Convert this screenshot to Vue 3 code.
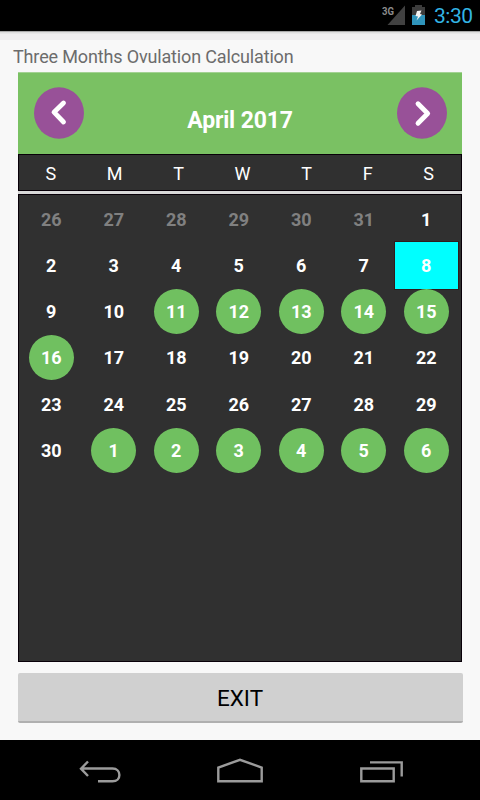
<script setup>
const weekdays = ['S', 'M', 'T', 'W', 'T', 'F', 'S']
const days = []
for (let d = 26; d <= 31; d++) days.push({ label: d, kind: 'muted' })
for (let d = 1; d <= 30; d++) {
  days.push({ label: d, kind: d === 8 ? 'selected' : d >= 11 && d <= 16 ? 'marked' : '' })
}
for (let d = 1; d <= 6; d++) days.push({ label: d, kind: 'marked' })
</script>

<template>
  <div class="screen">
    <header class="status">
      <svg class="signal" width="24" height="23" viewBox="0 0 24 23">
        <path d="M5.5 22H23V2.5Z" fill="#414141" />
        <text x="0" y="11.5" class="network" textLength="12" lengthAdjust="spacingAndGlyphs">3G</text>
      </svg>
      <svg class="battery" width="13" height="20" viewBox="0 0 13 20">
        <path d="M3 0H10V2H13V10H0V2H3Z" fill="#3c3c3c" />
        <path d="M0 10H13V20H0Z" fill="#2f94bb" />
        <path d="M5 6L9.5 5.5L8 9L10 9.5L4.5 15.5L6 11.5L3.5 11Z" fill="#f4f4f4" />
      </svg>
      <span class="clock">3:30</span>
    </header>
    <div class="shadow"></div>
    <main class="content">
      <h1 class="title"><span>Three Months Ovulation Calculation</span></h1>
      <section class="calendar">
        <div class="month">
          <button class="round" aria-label="Previous month">
            <svg width="50" height="52" viewBox="0 0 50 52">
              <ellipse cx="25" cy="26" rx="25" ry="25.7" fill="#985198" />
              <path d="M29.5 16L20 25.2L29.5 35" />
            </svg>
          </button>
          <span class="month-name">April 2017</span>
          <button class="round" aria-label="Next month">
            <svg width="50" height="52" viewBox="0 0 50 52">
              <ellipse cx="25" cy="26" rx="25" ry="25.7" fill="#985198" />
              <path d="M21 16.8L30.7 26.5L21 36.2" />
            </svg>
          </button>
        </div>
        <div class="weekdays">
          <span v-for="(w, i) in weekdays" :key="i">{{ w }}</span>
        </div>
        <div class="days">
          <div v-for="(d, i) in days" :key="i" class="day" :class="d.kind">
            <span>{{ d.label }}</span>
          </div>
        </div>
      </section>
      <button class="exit">EXIT</button>
    </main>
    <nav class="nav">
      <svg width="480" height="60" viewBox="0 0 480 60" fill="none" stroke="#9b9b9b" stroke-width="2.4">
        <path d="M98 41.3H112.5C121.7 41.3 121.7 28.5 112.5 28.5H81M88 21.5L81 28.7L88 36" />
        <path d="M218.3 41.3V27.5L240 19.8L261.7 27.5V41.3Z" />
        <path d="M361.3 28.5H393.7V41.3H361.3ZM370 22.4H401.7V36.5" />
      </svg>
    </nav>
  </div>
</template>

<style>
body { background: #f8f8f8; overflow: hidden; }
</style>

<style scoped>
.screen {
  width: 480px;
  height: 800px;
  display: flex;
  flex-direction: column;
  background: #f8f8f8;
  font-family: Roboto, "Liberation Sans", sans-serif;
}
.status {
  height: 31px;
  box-sizing: border-box;
  background: #000;
  display: flex;
  justify-content: flex-end;
  align-items: flex-start;
  padding: 3px 7.5px 0 0;
}
.network { font-size: 11.5px; font-weight: 700; fill: #8c8c8c; }
.battery { margin: 2px 9px 0 6px; }
.clock { font-size: 21px; line-height: 27px; letter-spacing: -0.5px; color: #33b5e5; }
.shadow {
  height: 9px;
  background: linear-gradient(#a9a9a9 0 1px, #dedede 1px 2px, #efeeef 3px);
}
.content {
  height: 700px;
  box-sizing: border-box;
  padding: 0 18px;
  display: flex;
  flex-direction: column;
}
.title {
  margin: 0 -5px;
  height: 32px;
  font-size: 18px;
  line-height: 33px;
  letter-spacing: -0.15px;
  font-weight: 400;
  color: #6c6c6c;
  white-space: nowrap;
}
.calendar { height: 590px; display: flex; flex-direction: column; background: #d8d8d8; }
.month {
  height: 82px;
  box-sizing: border-box;
  padding: 14px 15.5px 0 15.5px;
  display: flex;
  justify-content: space-between;
  background: #7ac163;
  border-top: 1px solid #a3d293;
}
.round { border: 0; padding: 0; width: 50px; height: 52px; background: none; }
.round svg { display: block; }
.round path { fill: none; stroke: #fff; stroke-width: 4.8; stroke-linecap: round; stroke-linejoin: round; }
.month-name {
  padding-top: 19px;
  font-size: 23px;
  line-height: 30px;
  letter-spacing: -0.15px;
  font-weight: 700;
  color: #fff;
}
.weekdays {
  height: 37px;
  box-sizing: border-box;
  margin-bottom: 3px;
  padding: 0 27px 0 26.4px;
  border: 1px solid #080008;
  background: #303030;
  color: #fff;
  font-size: 18px;
  line-height: 38px;
  display: flex;
  justify-content: space-between;
}
.days {
  height: 468px;
  box-sizing: border-box;
  padding: 1.3px 3px 0 1px;
  border: 1px solid #080008;
  background: #303030;
  display: grid;
  grid-template-columns: repeat(7, 62.5px);
  grid-template-rows: repeat(6, 46.2px);
  color: #fff;
  font-size: 18px;
  font-weight: 700;
}
.day { display: flex; align-items: center; justify-content: center; }
.day span { width: 45px; height: 45px; line-height: 46px; text-align: center; border-radius: 50%; }
.muted { color: #808080; }
.marked span { background: #70c060; }
.selected { background: #00ffff; box-shadow: 0 0 0 1px #301c1c; }
.exit {
  margin: 11px -0.5px 0;
  padding: 2px 0 0;
  height: 50px;
  border: 0;
  border-bottom: 2px solid #b0b0b0;
  border-radius: 2px;
  background: #d0d0d0;
  color: #000;
  font-family: inherit;
  font-size: 22.5px;
}
.nav { height: 60px; background: #000; }
.nav svg { display: block; }
</style>
